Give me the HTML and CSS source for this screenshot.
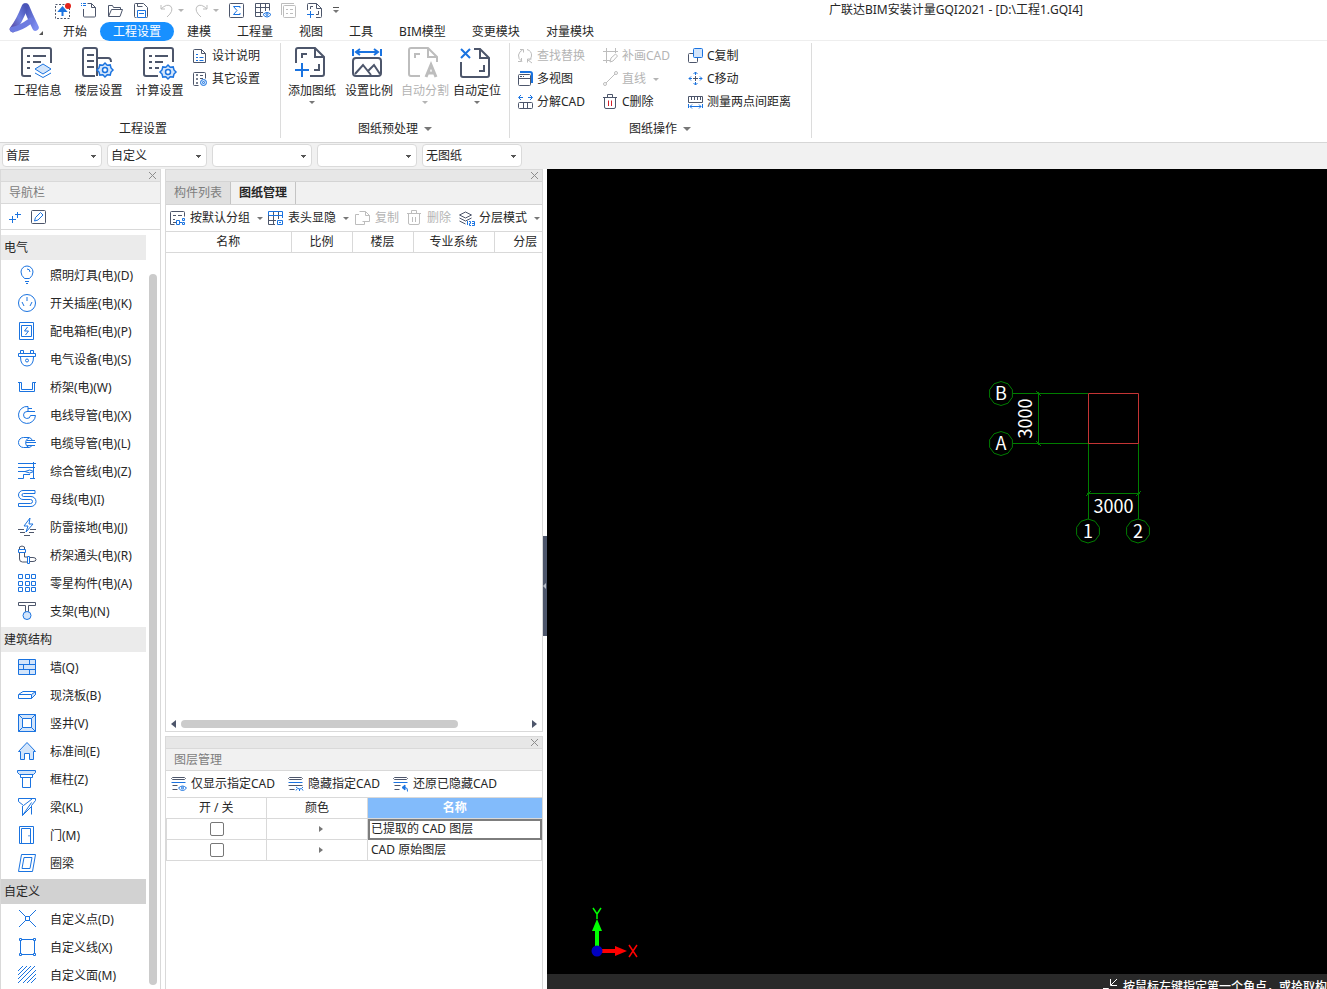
FILE: index.html
```html
<!DOCTYPE html>
<html lang="zh-CN">
<head>
<meta charset="utf-8">
<title>广联达BIM安装计量GQI2021</title>
<link rel="stylesheet" href="styles.css">
</head>
<body>
<header class="top">
  <div class="logo">
    <svg width="46" height="40" viewBox="0 0 46 40">
      <defs>
        <linearGradient id="lg1" x1="0" y1="1" x2="1" y2="0"><stop offset="0" stop-color="#5a4fa8"/><stop offset=".5" stop-color="#6f7fe0"/><stop offset="1" stop-color="#4a55b8"/></linearGradient>
        <linearGradient id="lg2" x1="0" y1="0" x2="1" y2="1"><stop offset="0" stop-color="#4650b4"/><stop offset="1" stop-color="#7d8df0"/></linearGradient>
      </defs>
      <path d="M26 6.500 30.500 17 35.500 27.500" fill="none" stroke="url(#lg2)" stroke-width="6.500" stroke-linecap="round"/>
      <path d="M25 6.500C22 14 18 23 13 29" fill="none" stroke="url(#lg1)" stroke-width="6.500" stroke-linecap="round"/>
      <path d="M12.500 29.500C17 29 25 25 31 20.500" fill="none" stroke="#6d7be0" stroke-width="5.500" stroke-linecap="round"/>
      <path d="M43 31v4h-4z" fill="#555"/>
    </svg>
  </div>
  <div class="top-main">
    <div class="title-row">
      <div class="quick">
        <button class="ib" aria-label="上传"><svg class="i16"><path d="M.5 2.500h14v14H.5z" stroke-dasharray="2 1.500" class="d"/><path d="M7.500 14V8M4.500 9l3-3.500 3 3.500z" class="b bf" stroke-width="2"/><circle cx="13" cy="4" r="3" fill="#e2231a"/></svg></button>
        <button class="ib" aria-label="新建"><svg class="i16"><path d="M6.500 1.500h4l4 4v8.500q0 1-1 1h-10q-1 0-1-1V7M10.500 1.500v4h4" class="d"/><path d="M0 1.500h5M0 3.500h5M.5 1v4M3.500 1v4" class="b" stroke-dasharray="1 1"/></svg></button>
        <button class="ib" aria-label="打开"><svg class="i16"><path d="M1.500 14V3.500h4l1 2h7v2M1.500 14.500l3-7h11l-2.500 7z" class="d"/></svg></button>
        <button class="ib" aria-label="保存"><svg class="i16"><path d="M3.500 15.500h-1q-1 0-1-1v-12q0-1 1-1h8l4 4v9q0 1-1 1h-1M4.500 2v2.500h5" class="d"/><path d="M4.500 15.500v-7h8v7zM6 11.500h5" class="b"/></svg></button>
        <span class="split"><button class="ib" aria-label="撤销"><svg class="i16"><path d="M2 3v4h4M2 7Q8 1 12 4.500 15 9 8 15" class="g"/></svg></button><i class="caret lt"></i></span>
        <span class="split"><button class="ib" aria-label="重做"><svg class="i16"><path d="M13 3v4H9M13 7Q7 1 3 4.500 0 9 7 15" class="g"/></svg></button><i class="caret lt"></i></span>
        <button class="ib" aria-label="汇总"><svg class="i16"><rect x=".5" y="1.500" width="14" height="14" rx="1" class="d"/><path d="M11 6V4.500H4.500L8 8.500l-3.500 4H11V11" class="b"/></svg></button>
        <button class="ib" aria-label="查看报表"><svg class="i16"><path d="M.5 1.500h14v7M.5 1.500v13h7M.5 5.500h14M.5 10.500H8M5.500 1.500v13M10.500 1.500V9" class="d"/><path d="M8 12.500q4-4 8 0-4 5-8 0z" class="b wf"/><circle cx="12" cy="12.500" r="1" class="b"/></svg></button>
        <button class="ib" aria-label="属性"><svg class="i16"><path d="M.5 13V1.500H13" class="g"/><rect x="2.500" y="3.500" width="12" height="12" rx="1" class="g"/><path d="M5 7.500h2M5 11.500h2M9 7.500h3M9 11.500h3" class="g"/></svg></button>
        <button class="ib" aria-label="添加图纸"><svg class="i16"><path d="M.5 8V2.500q0-1 1-1h8l5 5v8q0 1-1 1H9M9.500 1.500v5h5M3.500 7V4.500H6M11.500 9v3.500H9" class="d"/><path d="M3.500 9v7M0 12.500h7" class="b"/></svg></button>
        <button class="ib more" aria-label="自定义工具栏"><i class="bar"></i><i class="caret"></i></button>
      </div>
      <h1 class="title">广联达BIM安装计量GQI2021 - [D:\工程1.GQI4]</h1>
    </div>
    <nav class="menu">
      <button>开始</button><button class="on">工程设置</button><button>建模</button><button>工程量</button><button>视图</button><button>工具</button><button>BIM模型</button><button>变更模块</button><button>对量模块</button>
    </nav>
  </div>
</header>

<section class="ribbon">
  <div class="group info">
    <div class="group-body">
      <button class="big"><svg class="i32"><path d="M11 30H4q-2 0-2-2V4q0-2 2-2h25q2 0 2 2v13M7 10h3M7 16h3M7 22h3M13 10h13M13 16h8" class="d2"/><path d="M15 23 23 18l8 5-8 5z" class="b lf"/><path d="m15 27 8 4.500 8-4.500" class="b"/></svg>工程信息</button>
      <button class="big"><svg class="i32"><path d="M14 30H4q-2 0-2-2V4q0-2 2-2h10q2 0 2 2v26M6 9h7M6 15h7M6 21h7M16 12h11q3 0 3 4" class="d2"/><path d="m24 17 2.200 2.200 3-.3.800 3 2 2.100-2 2.100-.8 3-3-.3L24 31l-2.200-2.200-3 .3-.8-3L16 24l2-2.100.8-3 3 .3z" class="b gear lf"/><circle cx="24" cy="24" r="2.500" class="b gear wf"/></svg>楼层设置</button>
      <button class="big"><svg class="i32"><path d="M16 30H4q-2 0-2-2V4q0-2 2-2h25q2 0 2 2v12M7 10h3M7 16h3M7 22h3M13 10h13M13 16h8M13 22h4" class="d2"/><path d="m26 19 2.200 2.200 3-.3.800 3 2 2.100-2 2.100-.8 3-3-.3L26 33l-2.200-2.200-3 .3-.8-3-2-2.100 2-2.100.8-3 3 .3z" class="b gear lf"/><circle cx="26" cy="26" r="2.500" class="b gear wf"/></svg>计算设置</button>
      <div class="stack">
        <button class="sm"><svg class="i16"><path d="M1.500 1.500h7l4 4v9h-12v-12q0-1 1-1zM8.500 1.500v4h4" class="d"/><path d="M3 6.500h2M3 9.500h2M3 12.500h2M6.500 9.500h4M6.500 12.500h4" class="b"/></svg>设计说明</button>
        <button class="sm"><svg class="i16"><path d="M5.500 14.500h-4q-1 0-1-1v-11q0-1 1-1h10q1 0 1 1v5M7 4.500h3M7 7.500h3M3.500 3.500h1v1h-1zM3.500 7.500h1v1h-1zM3.500 11.500h1v1h-1z" class="d"/><circle cx="10.500" cy="11.500" r="3" class="b lf"/><circle cx="10.500" cy="11.500" r="1" class="b"/></svg>其它设置</button>
      </div>
    </div>
    <div class="group-title">工程设置</div>
  </div>
  <div class="group prep">
    <div class="group-body">
      <button class="big"><svg class="i32"><path d="M2 17V4q0-2 2-2h17l9 9v17q0 2-2 2H16M21 2v9h9M8 12V8h5M25 18v6h-5" class="d2"/><path d="M8 17v14M1 24h14" class="b2"/></svg>添加图纸<i class="caret"></i></button>
      <button class="big"><svg class="i32"><rect x="2" y="12" width="28" height="18" rx="3" class="d2"/><path d="m4 28 8-9 8 10M17 25l6-6 6 9" class="d2"/><path d="M2 3v7M30 3v7M5 6h22M9 3 5 6l4 3M23 3l4 3-4 3" class="b2"/></svg>设置比例</button>
      <button class="big off" disabled><svg class="i32"><path d="M13 30H4q-2 0-2-2V4q0-2 2-2h17l9 9v5M21 2v9h9M8 12V8h5" class="gr2"/><path d="m19 31 5-12 5 12M20.500 27h7" class="gr3"/></svg>自动分割<i class="caret lt"></i></button>
      <button class="big"><svg class="i32"><path d="M15 3h6l9 9v17q0 2-2 2H4q-2 0-2-2V16M21 3v9h9M25 19v6h-5" class="d2"/><path d="m2 3 9 9M11 3l-9 9" class="b2"/></svg>自动定位<i class="caret"></i></button>
    </div>
    <div class="group-title">图纸预处理<i class="caret wide"></i></div>
  </div>
  <div class="group edit">
    <div class="group-body cols">
      <div class="stack">
        <button class="sm off" disabled><svg class="i16"><path d="M4 13.500Q0 11 .5 7q1-4 4-5M2 1.500h3.500v3M9 1.500q5 1.500 4.500 6.500-.5 3-2.500 4.500M3.500 10v3.500H0M10 12l4 3M9.500 14.500v-3.500h4" class="g"/></svg>查找替换</button>
        <button class="sm"><svg class="i16"><rect x=".5" y="3.500" width="12" height="11" rx="1" class="d"/><path d="M1 7.500h11M2 5.500h2M5 5.500h1" class="d"/><path d="M2 1h10q2 0 2 2v9" class="b2"/></svg>多视图</button>
        <button class="sm"><svg class="i16"><path d="M.5 9.500q0-1 1-1h12q1 0 1 1v4q0 1-1 1h-12q-1 0-1-1zM5.500 9v5M9.500 9v5" class="d"/><path d="M1 3.500h4M3 1 .5 3.500 3 6M10 3.500h4M12 1l2.500 2.500L12 6" class="b"/></svg>分解CAD</button>
      </div>
      <div class="stack">
        <button class="sm off" disabled><svg class="i16"><path d="M0 3.500h15M3.500 0v15M0 12.500h7M12.500 0v5M7 14l1-4 4.500-4 2 2-4.500 5z" class="g"/></svg>补画CAD</button>
        <button class="sm off" disabled><svg class="i16"><path d="M3 12 12 3" class="g"/><circle cx="2" cy="13" r="1.500" class="g"/><circle cx="13" cy="2" r="1.500" class="g"/></svg>直线<i class="caret lt"></i></button>
        <button class="sm"><svg class="i16"><path d="M0 3.500h14M4.500 3V.5h5V3M1.500 4v9q0 1.500 1.500 1.500h8q1.500 0 1.500-1.500V4" class="d"/><path d="M5.500 6.500V12M8.500 6.500V12" class="r"/></svg>C删除</button>
      </div>
      <div class="stack">
        <button class="sm"><svg class="i16"><path d="M5 5.500H1.500q-1 0-1 1v7q0 1 1 1h7q1 0 1-1V10" class="d"/><rect x="5.500" y=".5" width="9" height="9" rx="1" class="b lf"/></svg>C复制</button>
        <button class="sm"><svg class="i16"><path d="M7.500 5v5M5 7.500h5" class="d"/><path d="M7.500 1v3M7.500 11v3M1 7.500h3M11 7.500h3M5.500 3l2-2 2 2M5.500 12l2 2 2-2M3 5.500l-2 2 2 2M12 5.500l2 2-2 2" class="b"/></svg>C移动</button>
        <button class="sm"><svg class="i16"><path d="M.5 2.500h14v6H.5zM3.500 3v3M6.500 3v3M9.500 3v3M12.500 3v3" class="d"/><path d="M.5 10v4M14.500 10v4M2 12.500h11M4 10.500l-2 2 2 2M11 10.500l2 2-2 2" class="b"/></svg>测量两点间距离</button>
      </div>
    </div>
    <div class="group-title">图纸操作<i class="caret wide"></i></div>
  </div>
</section>

<section class="filters">
  <select aria-label="楼层"><option>首层</option></select>
  <select aria-label="专业"><option>自定义</option></select>
  <select aria-label="构件类型"><option></option></select>
  <select aria-label="构件"><option></option></select>
  <select aria-label="图纸"><option>无图纸</option></select>
</section>

<main class="work">
  <aside class="panel nav">
    <div class="strip"><button class="close" aria-label="关闭"><svg width="9" height="9"><path d="m1 1 7 7M8 1 1 8" class="x"/></svg></button></div>
    <h2 class="panel-title">导航栏</h2>
    <div class="nav-tools">
      <button class="ib" aria-label="添加"><svg class="i16"><path d="M5.500 7v7M2 10.500h7M10.500 3v6M8 5.500h6" class="b"/></svg></button>
      <button class="ib" aria-label="编辑"><svg class="i16"><rect x=".5" y="1.500" width="14" height="13" rx="1" class="d"/><path d="m3.500 12 1-3.500L9.500 3.500 12 6l-5 5z" class="b"/></svg></button>
    </div>
    <div class="nav-scroll">
      <div class="tree">
        <h3>电气</h3>
        <button><svg class="i20"><path d="M7.500 13.500Q4 10.500 4 7a6 6 0 0 1 12 0q0 3.500-3.500 6.500zM8 16.500h4M9 18.500h2M10 4q3 0 3 3" class="b"/></svg>照明灯具(电)(D)</button>
        <button><svg class="i20"><circle cx="10" cy="10" r="8.500" class="b"/><path d="M10 4v4M5 9l2 4M15 9l-2 4" class="b"/></svg>开关插座(电)(K)</button>
        <button><svg class="i20"><path d="M2.500 1.500h14v17h-14zM4.500 4.500h10v11h-10z" class="b"/><path d="m10.500 6-3 4h4l-3 4" class="b"/></svg>配电箱柜(电)(P)</button>
        <button><svg class="i20"><path d="M1.500 4.500h17v3h-17zM3.500 4V1.500h3V4M13.500 4V1.500h3V4M3.500 8q0 9 6.500 9t6.500-9" class="b"/><circle cx="10" cy="11.500" r="1.500" class="b"/></svg>电气设备(电)(S)</button>
        <button><svg class="i20"><path d="M1 5.500h3.500v7h11v-7H19M2.500 6v8.500h15V6" class="b"/></svg>桥架(电)(W)</button>
        <button><svg class="i20"><path d="M11 1.500A8.500 8.500 0 1 0 18.500 10.500h-5A3.500 3.500 0 1 1 10 6.500h1v-5M11 3.500h4M11 6.500h7" class="b"/></svg>电线导管(电)(X)</button>
        <button><svg class="i20"><path d="M12 4.500H6.500a5 5 0 0 0 0 10H12M12 5a5 5 0 0 0 0 9.500q3-1 3-2M12 4.500q3 1 3 2.500M10 7.500h8M9 9.500h10M10 12.500h8" class="b"/></svg>电缆导管(电)(L)</button>
        <button><svg class="i20"><path d="M1 2.500h18M1 6.500h17M5 10.500h3q5-3 9 0-4 3-9 0M1 10.500h4M13 13.500H6.500v4H1M13 17.500h5M16.500 1v17" class="b"/></svg>综合管线(电)(Z)</button>
        <button><svg class="i20"><path d="M18 1.500H6a4 4 0 0 0 0 9h7.500a2 2 0 0 1 0 4H1.500v3H14a4.500 4.500 0 0 0 0-10H6.500a1.500 1.500 0 0 1 0-3H18z" class="b"/></svg>母线(电)(I)</button>
        <button><svg class="i20"><path d="m13 1-6 8h4l-2 6 7-8h-4z" class="b"/><path d="M1 12.500h6M13 12.500h6M3 15.500h5M12 15.500h5M7 18.500h6" class="d"/></svg>防雷接地(电)(J)</button>
        <button><svg class="i20"><path d="M2.500 8v6q0 3 3 3h5M7.500 8v4h3M2.500 5V2q2.500-2 5 0v3M13 12.500h3q3 0 3 2t-3 2h-3" class="d"/><path d="M1.500 4.500h7v3h-7zM10.500 11.500h2v7h-2z" class="b"/></svg>桥架通头(电)(R)</button>
        <button><svg class="i20"><path d="M1.500 1.500h4v4h-4zM8.500 1.500h4v4h-4zM14.500 1.500h4v4h-4zM1.500 8.500h4v4h-4zM8.500 8.500h4v4h-4zM14.500 8.500h4v4h-4zM1.500 14.500h4v4h-4zM8.500 14.500h4v4h-4zM14.500 14.500h4v4h-4z" class="b"/></svg>零星构件(电)(A)</button>
        <button><svg class="i20"><path d="M1.500 1.500h17v3h-7v7h-3v-7h-7z" class="d"/><circle cx="10" cy="14.500" r="4" class="b lf"/></svg>支架(电)(N)</button>
        <h3>建筑结构</h3>
        <button><svg class="i20"><path d="M1.500 2.500h17v15h-17z" class="b lf"/><path d="M1 7.500h18M1 12.500h18M12.500 2v5M6.500 7v6M12.500 13v4" class="b"/></svg>墙(Q)</button>
        <button><svg class="i20"><path d="M1.500 9.500 6 6.500h12.500v3l-4 4h-13z" class="b"/><path d="M14.500 9.500l4-3v3l-4 4z" class="b lf"/><path d="M2 9.500h12" class="b"/></svg>现浇板(B)</button>
        <button><svg class="i20"><path d="M1.500 1.500h17v17h-17z" class="b lf"/><path d="M5.500 5.500h9v9h-9z" class="b wf"/><path d="m1.500 1.500 4 4M18.500 1.500l-4 4M1.500 18.500l4-4M18.500 18.500l-4-4" class="b"/></svg>竖井(V)</button>
        <button><svg class="i20"><path d="M1.500 10.500 10 1.500l8.500 9h-2v8h-4v-6h-5v6h-4v-8z" class="b lf"/></svg>标准间(E)</button>
        <button><svg class="i20"><path d="M.5 1.500h18v2l-2 2h-14l-2-2z" class="b lf"/><path d="M3.500 5.500h12v3h-12z" class="b"/><path d="M5.500 8.500h8v10h-8z" class="b wf"/></svg>框柱(Z)</button>
        <button><svg class="i20"><path d="M1.500 1.500h17v2l-4 5v9M1.500 1.500v3l5 4L15 2M5.500 9v9.500l9-9M5.500 18.500l9-13" class="b"/></svg>梁(KL)</button>
        <button><svg class="i20"><path d="M2.500 1.500h14v17h-14zM4.500 18V3.500h9V18" class="b"/><path d="M12 10v1.500" class="b"/></svg>门(M)</button>
        <button><svg class="i20"><path d="M4.500 1.500h14l-3 17h-14zM7 4.500h8l-2 11H5z" class="b"/></svg>圈梁</button>
        <h3 class="sel">自定义</h3>
        <button><svg class="i20"><path d="m2 1 17 17M19 1 2 18" class="b"/><path d="M8.500 7.500h4v4h-4z" class="b wf"/></svg>自定义点(D)</button>
        <button><svg class="i20"><path d="M3.500 2.500h14v15h-14z" class="b"/><path d="M2.500 1.500h2v2h-2zM16.500 1.500h2v2h-2zM2.500 16.500h2v2h-2zM16.500 16.500h2v2h-2z" class="b wf"/></svg>自定义线(X)</button>
        <button><svg class="i20"><path d="m1 6 5-5M1 10l9-9M1 14 14 1M1 18 18 1M6 18 19 5M10 18l9-9M14 18l5-5" class="b"/></svg>自定义面(M)</button>
      </div>
      <div class="vbar"></div>
    </div>
  </aside>

  <div class="middle">
    <section class="panel drawings">
      <div class="strip"><button class="close" aria-label="关闭"><svg width="9" height="9"><path d="m1 1 7 7M8 1 1 8" class="x"/></svg></button></div>
      <div class="tabs"><button>构件列表</button><button class="on">图纸管理</button></div>
      <div class="tools">
        <button class="sm"><svg class="i16"><path d="M.5 14.500v-12q0-1 1-1h12q1 0 1 1v4M3 5.500h3M8 5.500h4M3 9.500h2M.5 14.500h4M3 12.500h3" class="d"/><path d="M6.500 10.500h3v4h-3zM12.500 8.500h2v2h-2zM12.500 12.500h2v2h-2zM10 12.500h2" class="b"/></svg>按默认分组<i class="caret"></i></button>
        <button class="sm t2"><svg class="i16"><path d="M.5 5v9.500H7M5.500 1v14M10.500 1v8M1 10.500h7" class="d"/><path d="M.5 5V1.500h14V8M.5 5.500h14" class="b"/><path d="M9.500 10.500h5v4h-5zM11 12.500h2" class="b"/></svg>表头显隐<i class="caret"></i></button>
        <button class="sm off t3" disabled><svg class="i16"><path d="M4 4.500H.5v10h9V12M4.500 1.500h6l4 4v6h-7M10.500 1.500v4h4" class="g"/></svg>复制</button>
        <button class="sm off" disabled><svg class="i16"><path d="M0 3.500h14M4.500 3V.5h5V3M1.500 4v9q0 1.500 1.500 1.500h8q1.500 0 1.500-1.500V4M5.500 7v5M8.500 7v5" class="g"/></svg>删除</button>
        <button class="sm"><svg class="i16"><path d="m.5 5 6-3 6 3-6 3zM.5 8l6 3 6-3M.5 11l6 3" class="d"/><path d="M8.500 11v4M10 11.500h1.500v2H10.500v2H12M13 11.500h2.500v4H13M13 13.500h2" class="b"/></svg>分层模式<i class="caret"></i></button>
      </div>
      <table class="grid">
        <colgroup><col class="w125"><col class="w61"><col class="w61"><col class="w81"><col></colgroup>
        <thead><tr><th>名称</th><th>比例</th><th>楼层</th><th>专业系统</th><th class="cut">分层</th></tr></thead>
      </table>
      <div class="blank"></div>
      <div class="hbar"><i class="al"></i><div class="track"><div class="thumb"></div></div><i class="ar"></i></div>
    </section>

    <section class="panel layers">
      <div class="strip"><button class="close" aria-label="关闭"><svg width="9" height="9"><path d="m1 1 7 7M8 1 1 8" class="x"/></svg></button></div>
      <h2 class="panel-title">图层管理</h2>
      <div class="tools wide">
        <button class="sm"><svg class="i16"><path d="M1.500 1.500h12l1 1-1 1h-12l-1-1zM1.500 9.500h5M1.500 13.500h5" class="d"/><path d="M.5 6.500h14" class="b"/><path d="M7.500 12q4-4 8 0-4 5-8 0z" class="b"/><circle cx="11.500" cy="12" r="1" class="b"/></svg>仅显示指定CAD</button>
        <button class="sm"><svg class="i16"><path d="M1.500 1.500h12l1 1-1 1h-12l-1-1zM.5 9.500h14M1.500 13.500h5" class="d"/><path d="M.5 6.500h14" class="b"/><path d="M8 11q4 4 7 0M9 13l-1 1.500M11.500 13v2M14 13l1 1.500" class="b"/></svg>隐藏指定CAD</button>
        <button class="sm"><svg class="i16"><path d="M1.500 1.500h12l1 1-1 1h-12l-1-1zM1.500 9.500h6M1.500 13.500h5" class="d"/><path d="M.5 6.500h14" class="b"/><path d="M9 11.500 12 9v5z" class="b bf"/><path d="M12 11.500q3 0 2.500 4" class="b"/></svg>还原已隐藏CAD</button>
      </div>
      <table class="grid rows">
        <colgroup><col class="w100"><col class="w101"><col></colgroup>
        <thead><tr><th>开 / 关</th><th>颜色</th><th class="hot">名称</th></tr></thead>
        <tbody>
          <tr><td><input type="checkbox" aria-label="已提取的 CAD 图层"></td><td><i class="ar sm-ar"></i></td><td class="name focus">已提取的 CAD 图层</td></tr>
          <tr><td><input type="checkbox" aria-label="CAD 原始图层"></td><td><i class="ar sm-ar"></i></td><td class="name">CAD 原始图层</td></tr>
        </tbody>
      </table>
    </section>
  </div>

  <div class="splitter"><button aria-label="收起"><i></i></button></div>

  <section class="view">
    <div class="canvas">
      <svg class="plan" width="180" height="180">
        <defs><path id="bubble" d="m0-12 7 2.300 4.400 6v7.400L7 9.700 0 12-7 9.700l-4.400-6v-7.400L-7-9.700z"/></defs>
        <g fill="none" stroke="#007d00">
          <path d="M33 23.500h75M33 73.500h75M58.500 22v53M56 21l5 5M56 71l5 5M108.500 73v76M158.500 73v76M107 123.500h53M106 126l5-5M156 126l5-5"/>
          <use href="#bubble" x="21" y="23.500"/><use href="#bubble" x="21" y="73.500"/><use href="#bubble" x="108" y="161"/><use href="#bubble" x="158" y="161"/>
        </g>
        <path d="M108.500 23.500h50v50h-50z" fill="none" stroke="#c43434"/>
        <g fill="#fff" text-anchor="middle">
          <text x="21" y="30">B</text><text x="21" y="80">A</text><text x="108" y="168">1</text><text x="158" y="168">2</text>
          <text x="133.500" y="143">3000</text><text transform="translate(52 48.500) rotate(-90)">3000</text>
        </g>
      </svg>
      <svg class="axis" width="52" height="54">
        <path d="M12 42V24" stroke="#0f0" stroke-width="4"/><path d="m12 13 5 12H7z" fill="#0f0"/><path d="m8 2 4 6v5M16 2l-4 6" fill="none" stroke="#0f0" stroke-width="1.500"/>
        <path d="M14 45h16" stroke="#f00" stroke-width="4"/><path d="m42 45-12-5v10z" fill="#f00"/><path d="m44 39 8 12M52 39l-8 12" stroke="#f00" stroke-width="1.500"/>
        <circle cx="12" cy="45" r="5.500" fill="#0000c0"/>
      </svg>
    </div>
    <footer class="status"><svg width="16" height="14"><path d="M14 0 8 6M7.500 0v6.500H14M0 9.500h5.500v5" fill="none" stroke="#fff"/></svg><span>按鼠标左键指定第一个角点，或拾取构</span></footer>
  </section>
</main>
</body>
</html>
```
FILE: styles.css
```css
* { box-sizing: border-box; }
body {
  margin: 0; height: 100vh; overflow: hidden;
  display: flex; flex-direction: column;
  background: #fff; color: #262626;
  font: 12px/16px "Noto Sans", "Noto Sans CJK SC", sans-serif;
}
h1, h2, h3 { margin: 0; font-size: 12px; font-weight: 400; }
button { border: 0; margin: 0; padding: 0; background: none; font: inherit; color: inherit; white-space: nowrap; }
svg { display: block; flex: none; overflow: visible; }
.i16 { width: 16px; height: 16px; }
.i20 { width: 20px; height: 20px; margin-bottom: 2px; }
.i32 { width: 32px; height: 32px; margin-right: 4px; }
.d, .d2 { fill: none; stroke: #4d566b; }
.b, .b2 { fill: none; stroke: #1a73e0; }
.g, .gr2, .gr3 { fill: none; stroke: #bdbdbd; }
.r { fill: none; stroke: #d3202b; }
.d2, .b2, .gr2 { stroke-width: 2px; }
.gear { stroke-width: 1.5px; }
.gr3 { stroke-width: 3px; }
.lf { fill: #d3e5fb; }
.bf { fill: #1a73e0; }
.wf { fill: #fff; }
.x { fill: none; stroke: #8c8c8c; }
.off { color: #b4b4b4; }
.caret { display: block; flex: none; border: 3px solid transparent; border-top-color: #777; border-bottom: 0; }
.caret.lt { border-top-color: #b4b4b4; }
.caret.wide { border-width: 4px 4px 0; }

.top { display: flex; flex: none; height: 41px; border-bottom: 1px solid #eee; }
.logo { width: 50px; flex: none; }
.top-main { flex: 1; min-width: 0; }
.title-row { display: flex; height: 20px; align-items: center; }
.quick { display: flex; gap: 10px; padding-left: 5px; width: 779px; flex: none; align-items: center; }
.split { display: flex; align-items: center; gap: 3px; }
.more { display: flex; flex-direction: column; gap: 2px; align-items: center; }
.bar { width: 6px; height: 1px; background: #555; }
.title { white-space: nowrap; }
.menu { display: flex; padding-top: 2px; }
.menu button { padding: 0 13px; height: 19px; line-height: 19px; border-radius: 10px; }
.menu .on { background: #1890ff; color: #fff; }

.ribbon { display: flex; flex: none; height: 101px; padding-top: 2px; }
.group { display: flex; flex-direction: column; height: 95px; border-right: 1px solid #dcdcdc; }
.group-body { display: flex; height: 78px; }
.group-title { display: flex; align-items: center; justify-content: center; gap: 6px; height: 16px; }
.info { width: 281px; padding-left: 7px; }
.info .group-title { padding-right: 1px; }
.prep { width: 229px; }
.prep .group-body { display: grid; grid-template-columns: 57px 56px 52px 48px; padding-left: 7px; }
.edit { width: 302px; padding-left: 8px; }
.edit .group-title { padding-right: 9px; }
.big { display: flex; flex-direction: column; align-items: center; padding-top: 3px; gap: 5px; }
.info .big { width: 61px; }
.prep .big { width: 48px; }
.big .caret { margin-top: -3px; }
.stack { display: flex; flex-direction: column; gap: 3px; padding-top: 3px; }
.sm { display: flex; align-items: center; gap: 3px; height: 20px; }
.info .stack { padding-left: 3px; }
.cols { display: grid; grid-template-columns: 85px 85px 1fr; }
.cols .caret { margin-left: 4px; }

.filters { display: flex; flex: none; gap: 5px; height: 27px; padding: 1px 2px; background: #f1f1f1; border-top: 1px solid #d6d6d6; }
.filters select {
  appearance: none; width: 100px; height: 23px; padding: 0 16px 0 3px;
  border: 1px solid #dadada; border-radius: 4px; font: inherit; color: inherit;
  background: conic-gradient(from -45deg at 50% 100%, #555 90deg, transparent 0) 88px 10px / 6px 3px no-repeat, #fff;
}
.filters select { background: linear-gradient(to bottom, #555 1px, transparent 1px) 88px 10px / 5px 3px no-repeat, linear-gradient(#555, #555) 89px 11px / 3px 1px no-repeat, linear-gradient(#555, #555) 90px 12px / 1px 1px no-repeat, #fff; }

.work { display: flex; flex: 1; min-height: 0; }
.panel { border: 1px solid #d9d9d9; display: flex; flex-direction: column; }
.nav { width: 161px; flex: none; border-bottom: 0; }
.strip { display: flex; justify-content: flex-end; align-items: center; height: 11px; flex: none; padding-right: 3px; background: #e7e7e7; }
.panel-title { height: 23px; flex: none; line-height: 21px; padding: 0 8px; background: #f1f1f1; color: #7d7d7d; border: solid #d9d9d9; border-width: 1px 0; }
.nav-tools { display: flex; gap: 8px; height: 25px; flex: none; align-items: center; padding-left: 6px; }
.nav-scroll { display: flex; flex: 1; min-height: 0; border-top: 1px solid #d9d9d9; padding-top: 4px; overflow: hidden; }
.tree { width: 145px; flex: none; }
.tree h3 { height: 25px; margin: 1px 0 2px; line-height: 25px; padding-left: 3px; background: #ebebeb; }
.tree h3.sel { background: #d2d2d2; }
.tree button { display: flex; align-items: center; gap: 13px; width: 100%; height: 28px; padding-left: 16px; }
.vbar { width: 8px; margin: 40px 0 4px 3px; border-radius: 4px; background: #cbcbcb; }

.middle { width: 378px; margin-left: 4px; flex: none; display: flex; flex-direction: column; gap: 4px; }
.drawings { flex: 564; }
.layers { flex: 253; border-bottom: 0; }
.tabs { display: flex; height: 24px; flex: none; background: #f1f1f1; border: solid #d4d4d4; border-width: 1px 0; }
.tabs button { width: 64px; color: #7d7d7d; background: #e0e0e0; }
.tabs .on { width: 66px; color: #262626; font-weight: 700; background: #f1f1f1; border: solid #c4c4c4; border-width: 0 1px; }
.tools { display: flex; height: 26px; flex: none; align-items: center; gap: 8px; padding-left: 4px; }
.tools .caret { margin-left: 3px; }
.tools .sm { gap: 4px; }
.tools .t2 { margin-left: -3px; }
.tools .t3 { margin-left: -2px; }
.tools.wide { gap: 13px; padding-left: 5px; }
.grid { width: 100%; flex: none; table-layout: fixed; border-collapse: collapse; border: solid #d9d9d9; border-width: 1px 0; }
.grid th { height: 21px; padding: 0; font-weight: 400; border-right: 1px solid #d9d9d9; }
.grid th:last-child { border-right: 0; }
.grid .cut { padding-left: 14px; }
.w125 { width: 125px; }
.w61 { width: 61px; }
.w81 { width: 81px; }
.w100 { width: 100px; }
.w101 { width: 101px; }
.blank { flex: 1; }
.hbar { display: flex; align-items: center; gap: 5px; height: 15px; padding: 0 5px; }
.al, .ar { flex: none; border: 4px solid transparent; }
.al { border-left: 0; border-right: 5px solid #4d566b; }
.ar { border-right: 0; border-left: 5px solid #4d566b; }
.track { flex: 1; }
.thumb { width: 80%; height: 8px; border-radius: 4px; background: #cbcbcb; }
.rows td { height: 21px; padding: 0; text-align: center; border: 1px solid #d9d9d9; }
.rows .hot { background: #82bbfb; color: #fff; font-weight: 700; }
.rows .name { text-align: left; padding-left: 3px; }
.rows .focus { outline: 2px solid #7d7d7d; outline-offset: -2px; }
.rows input { appearance: none; display: block; width: 14px; height: 14px; margin: 0 auto; border: 1px solid #777; border-radius: 2px; background: #fff; }
.sm-ar { display: block; width: 4px; margin: 0 auto; border-width: 3px 0 3px 4px; border-left-color: #777; transform: translateX(4px); }

.splitter { width: 4px; flex: none; display: flex; align-items: center; padding-top: 14px; }
.splitter button { width: 4px; height: 100px; background: #4d566b; display: flex; align-items: center; }
.splitter i { border: 3px solid transparent; border-left: 0; border-right-color: #b8bdc8; }

.view { flex: 1; min-width: 0; display: flex; flex-direction: column; background: #000; }
.canvas { flex: 1; position: relative; }
.plan { position: absolute; left: 433px; top: 201px; font: 18px "Noto Sans CJK SC", sans-serif; }
.axis { position: absolute; left: 38px; bottom: 14px; overflow: visible; }
.status { display: flex; justify-content: flex-end; gap: 4px; height: 15px; flex: none; overflow: hidden; padding-top: 5px; background: #292929; color: #fff; font-weight: 500; white-space: nowrap; }
```
